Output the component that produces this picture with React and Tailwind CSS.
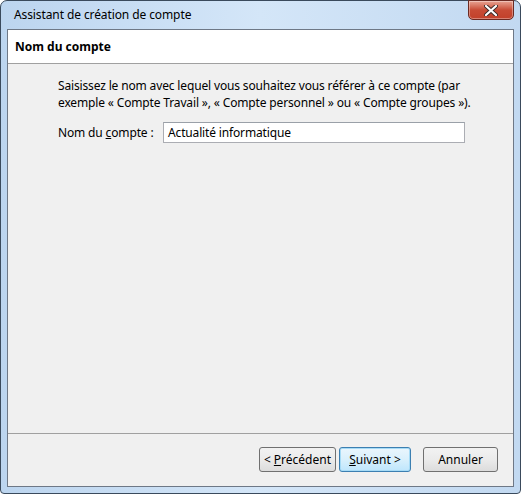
export default function App() {
  const font = { fontFamily: '"Noto Sans", "Open Sans", sans-serif' };
  return (
    <div className="w-[521px] h-[494px] bg-white" style={font}>
      <div className="relative w-[521px] h-[494px] rounded-t-[7px] rounded-b-[4px] border border-[#3a4a5c] bg-gradient-to-r from-[#bcd5ef] via-[#d4e6f8] to-[#c2d9f1] flex flex-col px-[6px] pb-[6px]">
        <div className="h-[28px] flex items-center pl-[7px] text-[12px] text-black tracking-[-0.1px]">
          Assistant de création de compte
        </div>
        <div className="absolute right-[6px] top-[-1px] w-[46px] h-[20px] rounded-b-[5px] border border-[#6b2a22] bg-gradient-to-b from-[#e8a393] via-[#c84b35] to-[#c2402a] flex items-center justify-center shadow-[inset_0_0_0_1px_rgba(255,255,255,0.35)]">
          <svg width="14" height="11" viewBox="0 0 14 11">
            <path d="M2 1 L12 10 M12 1 L2 10" stroke="#3a2a28" strokeWidth="4" strokeLinecap="round" />
            <path d="M2 1 L12 10 M12 1 L2 10" stroke="#ffffff" strokeWidth="2.2" strokeLinecap="round" />
          </svg>
        </div>
        <div className="flex-1 flex flex-col border border-[#6e7886] bg-[#f0f0f0]">
          <div className="h-[34px] bg-white border-b border-[#a0a0a0] flex items-center pl-[7px] text-[12px] font-bold text-black">
            Nom du compte
          </div>
          <div className="flex-1 flex flex-col pl-[50px] pt-[13px] text-[12px] text-black leading-[17px] tracking-[-0.15px]">
            <p className="whitespace-nowrap">
              Saisissez le nom avec lequel vous souhaitez vous référer à ce compte (par
              <br />
              exemple « Compte Travail », « Compte personnel » ou « Compte groupes »).
            </p>
            <div className="flex items-center mt-[11px]">
              <span className="w-[105px]">
                Nom du <span className="underline">c</span>ompte :
              </span>
              <div className="w-[302px] h-[21px] border border-[#abadb3] border-t-[#9aa0a8] bg-white flex items-center pl-[4px]">
                Actualité informatique
              </div>
            </div>
          </div>
          <div className="h-[53px] border-t border-[#a0a0a0] flex items-start pt-[13px] pl-[251px] text-[12px] text-black">
            <button className="w-[77px] h-[25px] rounded-[3px] border border-[#707070] bg-gradient-to-b from-[#f2f2f2] via-[#ebebeb] to-[#dcdcdc] flex items-center justify-center">
              &lt; <span className="underline ml-[3px]">P</span>récédent
            </button>
            <button className="ml-[3px] w-[72px] h-[25px] rounded-[3px] border border-[#3c7fb1] bg-gradient-to-b from-[#eaf6fd] via-[#d9f0fc] to-[#bee6fd] shadow-[inset_0_0_0_1px_#a6dbf6] flex items-center justify-center">
              <span className="underline">S</span>uivant &gt;
            </button>
            <button className="ml-[12px] w-[75px] h-[25px] rounded-[3px] border border-[#707070] bg-gradient-to-b from-[#f2f2f2] via-[#ebebeb] to-[#dcdcdc] flex items-center justify-center">
              Annuler
            </button>
          </div>
        </div>
      </div>
    </div>
  );
}
